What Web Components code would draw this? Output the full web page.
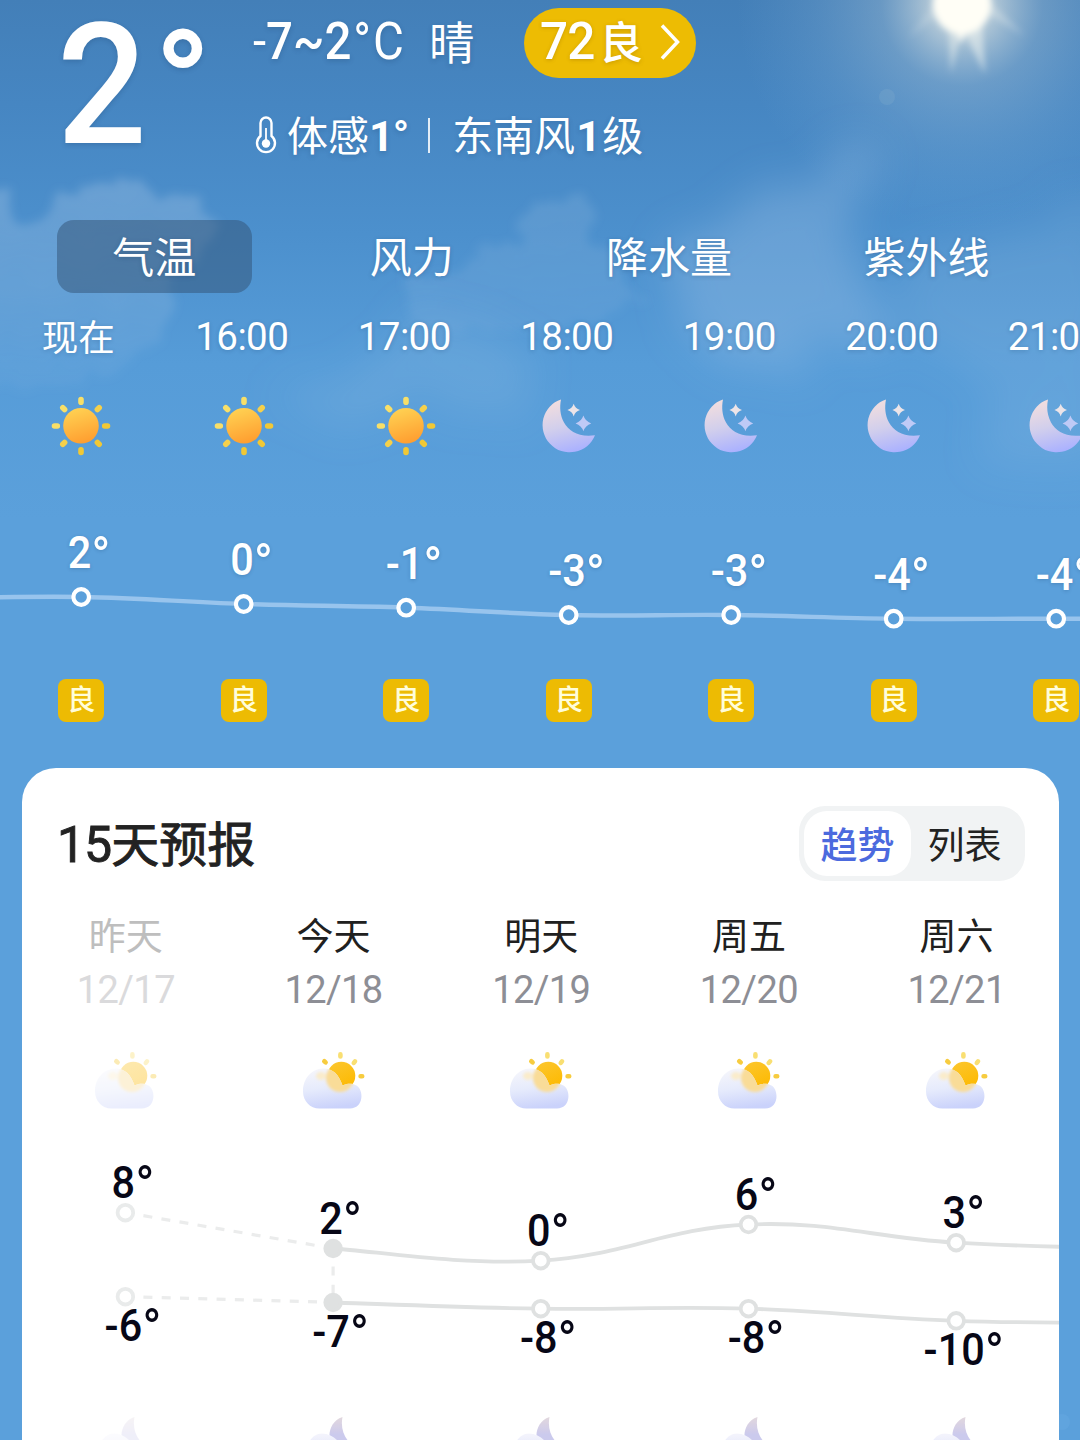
<!DOCTYPE html>
<html lang="zh-CN">
<head>
<meta charset="UTF-8">
<title>天气</title>
<style>
    body {
        margin: 0;
        width: 1080px;
        height: 1440px;
        overflow: hidden;
        background: #5aa0db;
        font-family: Roboto, "Noto Sans CJK SC", sans-serif;
    }
</style>
</head>
<body>
<weather-app></weather-app>

<script>
// Smooth curve through the points
function curve(pts) {
    const k = 0.2;
    let d = `M${pts[0][0]} ${pts[0][1]}`;
    for (let i = 0; i < pts.length - 1; i++) {
        const p0 = pts[i - 1] || pts[i];
        const p1 = pts[i];
        const p2 = pts[i + 1];
        const p3 = pts[i + 2] || p2;
        d += `C${p1[0] + (p2[0] - p0[0]) * k} ${p1[1] + (p2[1] - p0[1]) * k} ${p2[0] - (p3[0] - p1[0]) * k} ${p2[1] - (p3[1] - p1[1]) * k} ${p2[0]} ${p2[1]}`;
    }
    return d;
}

// Temperature label, slightly condensed, centered on x
function label(x, y, value, color) {
    return `<text transform="translate(${x} ${y}) scale(0.92 1)" text-anchor="middle" fill="${color}" font-size="45" font-weight="500">${value}<tspan font-size="56" font-weight="400" dy="7.500">°</tspan></text>`;
}

const ICONS = {
    sun: `
        <defs>
            <linearGradient id="g" x1="0.3" y1="0" x2="0.6" y2="1">
                <stop offset="0" stop-color="#ffd253"/><stop offset="1" stop-color="#ff9d2f"/>
            </linearGradient>
        </defs>
        <g stroke-width="5.600" stroke-linecap="round">
            <path stroke="#f8df68" d="M32 5.500v2.800M13.800 13.800l1.800 1.800M5.500 32h2.800"/>
            <path stroke="#f5d04b" d="M50.200 13.800l-1.800 1.800M13.800 50.200l1.800-1.800"/>
            <path stroke="#f1c835" d="M55.700 32h2.800M50.200 50.200l-1.800-1.800M32 55.700v2.800"/>
        </g>
        <circle cx="32" cy="31.800" r="17.800" fill="url(#g)"/>`,
    moon: `
        <defs>
            <linearGradient id="g" x1="0.3" y1="0" x2="0.55" y2="1">
                <stop offset="0" stop-color="#f3dede"/><stop offset="0.5" stop-color="#d2cfec"/><stop offset="1" stop-color="#aab1ff"/>
            </linearGradient>
        </defs>
        <path fill="url(#g)" d="M24 5.400A27.200 27.200 0 1 0 58 41.300C42 43.500 32 37.500 27 28.500C23 21 22.500 13 24 5.400Z"/>
        <path fill="#ece4e8" d="M36.700 9.800q1.500 4.800 6.300 6.300q-4.800 1.500-6.300 6.300q-1.500-4.800-6.300-6.300q4.800-1.500 6.300-6.300z"/>
        <path fill="#bfcaf6" d="M46.400 21.600q1.900 5.900 7.800 7.800q-5.900 1.900-7.800 7.800q-1.900-5.900-7.800-7.800q5.900-1.900 7.800-7.800z"/>`,
    partly: `
        <defs>
            <linearGradient id="g" x1="0.2" y1="0" x2="0.4" y2="1">
                <stop offset="0" stop-color="#f6f6fb"/><stop offset="0.5" stop-color="#e6ebfc"/><stop offset="1" stop-color="#cad2fb"/>
            </linearGradient>
            <linearGradient id="s" x1="0.2" y1="0" x2="0.7" y2="1">
                <stop offset="0" stop-color="#fcc62d"/><stop offset="1" stop-color="#fdb900"/>
            </linearGradient>
            <clipPath id="c"><path d="M18.500 60.500C9 60.500 2 53 2 43.500C2 31 10 21 22 20.600C32 20.300 38 27 41.500 37.500C46 35.500 51 35 55.500 37.600C63 42 63 60.500 49 60.500Z"/></clipPath>
            <filter id="b" x="-40%" y="-40%" width="180%" height="180%"><feGaussianBlur stdDeviation="1.600"/></filter>
        </defs>
        <circle cx="40.300" cy="27.800" r="14" fill="url(#s)"/>
        <g stroke-width="4.600" stroke-linecap="round">
            <path stroke="#f7cc3f" d="M23.300 13.200l1.300 1.200M59.600 28.300h1.600"/>
            <path stroke="#f9df72" d="M39.400 6.400v2M54 13.400l-1.200 1.500"/>
        </g>
        <path fill="url(#g)" d="M18.500 60.500C9 60.500 2 53 2 43.500C2 31 10 21 22 20.600C32 20.300 38 27 41.500 37.500C46 35.500 51 35 55.500 37.600C63 42 63 60.500 49 60.500Z"/>
        <g clip-path="url(#c)">
            <g filter="url(#b)">
                <circle cx="39" cy="30" r="14" fill="#f9dc98"/>
                <ellipse cx="20" cy="28" rx="5" ry="4" fill="#faeccb"/>
            </g>
        </g>`,
    cloudyNight: `
        <defs>
            <linearGradient id="g" x1="0" y1="0" x2="0" y2="1">
                <stop offset="0" stop-color="#ddd1d8"/><stop offset="0.5" stop-color="#c3c1ea"/>
            </linearGradient>
            <linearGradient id="w" x1="0" y1="0" x2="0" y2="1">
                <stop offset="0" stop-color="#f3f3fc"/><stop offset="1" stop-color="#cad2fb"/>
            </linearGradient>
        </defs>
        <path fill="url(#g)" d="M40.500 7C31 10 27 19 27.500 27C31 40 44 46 59 39C49 37 37 25 40.500 7Z"/>
        <path fill="url(#w)" d="M17 60C-3 60 1 24 20 23.500C30 24 37 30 40 38C57 32 63 60 48 60Z"/>`
};

class WeatherIcon extends HTMLElement {
    constructor() {
        super();
        this.attachShadow({ mode: 'open' });
    }

    connectedCallback() {
        this.shadowRoot.innerHTML = `
            <style>
                :host { display: block; width: 64px; height: 64px; }
                svg { display: block; width: 100%; height: 100%; overflow: visible; }
            </style>
            <svg viewBox="0 0 64 64" fill="none">${ICONS[this.getAttribute('name')]}</svg>
        `;
    }
}

class WeatherSky extends HTMLElement {
    constructor() {
        super();
        this.attachShadow({ mode: 'open' });
        this.shadowRoot.innerHTML = `
            <style>
                :host { display: block; position: absolute; inset: 0; z-index: -1; }
                svg { display: block; }
            </style>
            <svg width="1080" height="1440" viewBox="0 0 1080 1440">
                <defs>
                    <linearGradient id="sky" x1="0" y1="0" x2="0" y2="520" gradientUnits="userSpaceOnUse">
                        <stop offset="0" stop-color="#437fb8"/>
                        <stop offset="0.2" stop-color="#4686c2"/>
                        <stop offset="0.45" stop-color="#4c90cd"/>
                        <stop offset="0.7" stop-color="#569cd8"/>
                        <stop offset="1" stop-color="#5ba0db"/>
                    </linearGradient>
                    <radialGradient id="halo">
                        <stop offset="0" stop-color="#fffdf2" stop-opacity="0.95"/>
                        <stop offset="0.16" stop-color="#e6e9e4" stop-opacity="0.62"/>
                        <stop offset="0.36" stop-color="#b4cad9" stop-opacity="0.34"/>
                        <stop offset="0.65" stop-color="#94b9d8" stop-opacity="0.18"/>
                        <stop offset="1" stop-color="#7cacd8" stop-opacity="0"/>
                    </radialGradient>
                    <filter id="soft" x="-30%" y="-30%" width="160%" height="160%"><feGaussianBlur stdDeviation="3"/></filter>
                    <filter id="puff" x="-20%" y="-20%" width="140%" height="140%">
                        <feTurbulence type="fractalNoise" baseFrequency="0.03" numOctaves="5" seed="8" result="n"/>
                        <feDisplacementMap in="SourceGraphic" in2="n" scale="40" xChannelSelector="R" yChannelSelector="G"/>
                        <feGaussianBlur stdDeviation="5"/>
                    </filter>
                    <filter id="haze" x="-40%" y="-40%" width="180%" height="180%">
                        <feTurbulence type="fractalNoise" baseFrequency="0.02" numOctaves="4" seed="3" result="n"/>
                        <feDisplacementMap in="SourceGraphic" in2="n" scale="60" xChannelSelector="R" yChannelSelector="G"/>
                        <feGaussianBlur stdDeviation="20"/>
                    </filter>
                    <linearGradient id="fade" x1="0" y1="180" x2="0" y2="390" gradientUnits="userSpaceOnUse">
                        <stop offset="0" stop-color="#a5c4e4" stop-opacity="0.36"/>
                        <stop offset="0.5" stop-color="#a5c4e4" stop-opacity="0.24"/>
                        <stop offset="1" stop-color="#a5c4e4" stop-opacity="0.06"/>
                    </linearGradient>
                </defs>
                <rect width="1080" height="1440" fill="url(#sky)"/>

                <g filter="url(#puff)" fill="url(#fade)">
                    <path d="M-20 190L8 190L18 214L52 220L62 190L100 182L135 186L150 196L185 192L203 200L212 230L190 270L160 330L120 370L60 385L-20 390Z"/>
                    <path d="M405 280L470 265L515 240L540 200L580 200L598 245L640 300L560 330L470 330L420 320Z" fill-opacity="0.6"/>
                </g>
                <g filter="url(#haze)" fill="#a2c4e6">
                    <path d="M670 250L740 200L800 190L845 145L870 160L850 240L890 330L780 370L690 340Z" fill-opacity="0.32"/>
                    <path d="M900 260L1000 230L1110 195L1110 340L980 380L900 330Z" fill-opacity="0.18"/>
                    <path d="M270 395L340 380L430 320L540 340L520 420L420 400L330 425Z" fill-opacity="0.19"/>
                    <path d="M980 390L1110 340L1110 450L990 460Z" fill-opacity="0.17"/>
                </g>

                <circle cx="962" cy="5" r="225" fill="url(#halo)"/>
                <g filter="url(#soft)" fill="#fffef6">
                    <ellipse cx="962" cy="4" rx="29" ry="30"/>
                    <path d="M948 20L951 74L962 28Z" fill-opacity="0.4"/>
                    <path d="M962 28L985 74L982 18Z" fill-opacity="0.45"/>
                    <path d="M956 26L961 44L968 26Z"/>
                    <path d="M984 12L1025 36L990 2Z" fill-opacity="0.25"/>
                    <path d="M940 14L908 38L934 4Z" fill-opacity="0.15"/>
                </g>
                <circle cx="887" cy="97" r="8" fill="#b9cfd8" fill-opacity="0.12"/>
                <circle cx="1062" cy="1422" r="8" fill="#6bade4" fill-opacity="0.35"/>
            </svg>
        `;
    }
}

class CurrentWeather extends HTMLElement {
    constructor() {
        super();
        this.attachShadow({ mode: 'open' });
        this.shadowRoot.innerHTML = `
            <style>
                :host {
                    display: flex;
                    height: 220px;
                    color: #fff;
                    text-shadow: 0 2px 5px rgba(20, 50, 90, 0.22);
                    white-space: nowrap;
                }
                .temp { display: flex; width: 253px; }
                .temp b {
                    font-weight: 500;
                    font-size: 168px;
                    line-height: 172px;
                    margin: 0 0 0 57px;
                    width: 97px;
                    transform: scaleX(0.94);
                    transform-origin: left;
                }
                .temp i { font-style: normal; font-weight: 700; font-size: 148px; line-height: 172px; }
                .info { display: flex; flex-direction: column; }
                .row { display: flex; align-items: center; }
                .row.top { height: 86px; font-size: 51px; }
                .range { width: 178px; margin-top: -3px; }
                .range span { display: block; transform: scaleX(0.93); transform-origin: left; font-weight: 500; }
                .range em { font-style: normal; font-weight: 400; }
                .range em + em { margin-left: 2px; }
                .sky { font-size: 45.500px; width: 93px; margin: -7px 2px 0 -2px; }
                .aqi {
                    display: flex;
                    align-items: center;
                    box-sizing: border-box;
                    width: 172px;
                    height: 70px;
                    padding-left: 16px;
                    border-radius: 35px;
                    background: #edbc03;
                    font-weight: 500;
                    text-shadow: 0 1px 4px rgba(120, 80, 0, 0.3);
                }
                .aqi .num { width: 61px; letter-spacing: -1px; margin-top: -4px; transform: scaleX(0.97); transform-origin: left; }
                .aqi .lvl { font-size: 44px; width: 59px; margin: -6px 2px 0 -2px; }
                .aqi svg { margin-top: -2px; }
                .row.feel { height: 97px; font-size: 41px; }
                .feel span { margin-top: -4px; }
                .feel svg { width: 22px; height: 38px; margin-right: 10px; margin-left: 2px; }
                .feel b { font-weight: 700; font-size: 43px; letter-spacing: -1px; }
                .feel .wind b { letter-spacing: 1.500px; margin-left: 1px; }
                .feel b i { font-style: normal; font-weight: 500; }
                .bar { width: 2px; height: 35px; background: rgba(255, 255, 255, 0.85); margin: 2px 22px 0 20px; }
            </style>
            <div class="temp"><b>2</b><i>°</i></div>
            <div class="info">
                <div class="row top">
                    <div class="range"><span><em>-</em>7~2<em>°</em><em>C</em></span></div>
                    <div class="sky">晴</div>
                    <div class="aqi">
                        <span class="num">72</span><span class="lvl">良</span>
                        <svg width="20" height="36" viewBox="0 0 20 36" fill="none" stroke="#fff" stroke-width="3.500"><path d="M2 1.500L17.500 18L2 34.500"/></svg>
                    </div>
                </div>
                <div class="row feel">
                    <svg viewBox="0 0 22 38" fill="none" stroke="#fff" stroke-width="2.400">
                        <path d="M5.500 20V7a5.500 5.500 0 0 1 11 0V20a9 9 0 1 1-11 0Z"/>
                        <path d="M11 12V26" stroke-width="1.800"/>
                        <circle cx="11" cy="27.500" r="4.200" fill="#fff" stroke="none"/>
                    </svg>
                    <span>体感<b>1<i>°</i></b></span>
                    <div class="bar"></div>
                    <span class="wind">东南风<b>1</b>级</span>
                </div>
            </div>
        `;
    }
}

class TabBar extends HTMLElement {
    constructor() {
        super();
        this.attachShadow({ mode: 'open' });
        this.shadowRoot.innerHTML = `
            <style>
                :host { display: grid; grid-template-columns: repeat(4, 257.400px); margin-left: 25.600px; height: 73px; }
                ::slotted(span) {
                    display: flex;
                    align-items: center;
                    justify-content: center;
                    width: 195px;
                    height: 69px;
                    padding-bottom: 4px;
                    margin: 0 auto;
                    border-radius: 17px;
                    color: #fff;
                    font-size: 42px;
                    text-shadow: 0 1px 4px rgba(20, 50, 90, 0.25);
                }
                ::slotted(.on) { background: rgba(50, 82, 115, 0.5); }
            </style>
            <slot></slot>
        `;
    }
}

class HourStrip extends HTMLElement {
    constructor() {
        super();
        this.attachShadow({ mode: 'open' });
        this.hours = [
            ['现在', 'sun', 2, 597],
            ['16:00', 'sun', 0, 604],
            ['17:00', 'sun', -1, 607.7],
            ['18:00', 'moon', -3, 615],
            ['19:00', 'moon', -3, 615],
            ['20:00', 'moon', -4, 618.7],
            ['21:00', 'moon', -4, 618.7]
        ];
    }

    connectedCallback() {
        const top = 472;
        const pts = this.hours.map((h, i) => [81.2 + i * 162.5, h[3] - top]);
        const line = curve([[-81, 599 - top], ...pts, [1219, 619 - top]]);

        this.shadowRoot.innerHTML = `
            <style>
                :host { display: block; color: #fff; text-shadow: 0 1px 4px rgba(20, 50, 90, 0.22); }
                .row { display: grid; grid-template-columns: repeat(7, 162.500px); justify-items: center; align-items: center; }
                .times { height: 86px; font-size: 38.500px; letter-spacing: -0.600px; margin-left: -2px; }
                .times span:first-child { font-size: 36.500px; margin: -2px 2px 0 0; letter-spacing: 0; }
                .icons { height: 93px; }
                svg.chart { display: block; overflow: visible; }
                .badges span {
                    display: flex;
                    justify-content: center;
                    width: 46px;
                    height: 43px;
                    border-radius: 8px;
                    background: #edbb03;
                    color: #fffdda;
                    font-size: 28.500px;
                    line-height: 44px;
                    font-weight: 500;
                    text-shadow: none;
                }
            </style>
            <div class="row times">${this.hours.map(h => `<span>${h[0]}</span>`).join('')}</div>
            <div class="row icons">${this.hours.map(h => `<weather-icon name="${h[1]}"></weather-icon>`).join('')}</div>
            <svg class="chart" width="1080" height="206.500" viewBox="0 0 1080 206.500">
                <path d="${line}" fill="none" stroke="#98c4ed" stroke-width="4.400"/>
                ${pts.map((p, i) => `
                    <circle cx="${p[0]}" cy="${p[1]}" r="7.800" fill="#5ba0db" stroke="#fff" stroke-width="4.200"/>
                    ${label(p[0] + 7.9, p[1] - 29, this.hours[i][2], '#fff')}
                `).join('')}
            </svg>
            <div class="row badges">${this.hours.map(() => '<span>良</span>').join('')}</div>
        `;
    }
}

class SegmentToggle extends HTMLElement {
    constructor() {
        super();
        this.attachShadow({ mode: 'open' });
        this.shadowRoot.innerHTML = `
            <style>
                :host {
                    display: flex;
                    box-sizing: border-box;
                    width: 226px;
                    height: 75px;
                    padding: 5px;
                    border-radius: 26px;
                    background: #f1f3f4;
                }
                ::slotted(span) {
                    display: flex;
                    align-items: center;
                    justify-content: center;
                    width: 107px;
                    height: 58px;
                    padding-top: 7px;
                    border-radius: 23px;
                    font-size: 37px;
                    line-height: 54px;
                    color: #222;
                }
                ::slotted(.on) { background: #fff; color: #4c6ade; font-weight: 500; }
            </style>
            <slot></slot>
        `;
    }
}

class ForecastCard extends HTMLElement {
    constructor() {
        super();
        this.attachShadow({ mode: 'open' });
        this.days = [
            ['昨天', '12/17', 8, -6, 1212.7, 1296.7],
            ['今天', '12/18', 2, -7, 1248.5, 1302.5],
            ['明天', '12/19', 0, -8, 1260.7, 1308.7],
            ['周五', '12/20', 6, -8, 1224.5, 1308.7],
            ['周六', '12/21', 3, -10, 1242.7, 1320.8]
        ];
    }

    // One row of markers with their labels
    markers(pts, key, dy) {
        return pts.map((p, i) => {
            const color = i === 0 ? '#e9ebeb' : '#dfe1e1';
            const fill = i === 1 ? color : '#fff';
            return `
                <circle cx="${p[0]}" cy="${p[1]}" r="7.800" fill="${fill}" stroke="${color}" stroke-width="3.800"/>
                ${label(p[0] + 7.6, p[1] + dy, this.days[i][key], '#070716')}`;
        }).join('');
    }

    connectedCallback() {
        const top = 1130;
        const x = i => 103.4 + i * 207.7;
        const high = this.days.map((d, i) => [x(i), d[4] - top]);
        const low = this.days.map((d, i) => [x(i), d[5] - top]);
        const next = x(5);

        this.shadowRoot.innerHTML = `
            <style>
                :host {
                    display: block;
                    width: 1037px;
                    height: 672px;
                    margin: 46.500px 0 0 22px;
                    border-radius: 34px 34px 0 0;
                    background: #fff;
                    overflow: hidden;
                }
                header { display: flex; justify-content: space-between; align-items: center; height: 75px; padding: 38px 34px 0 35px; }
                h2 { margin: 4px 0 0; font-size: 48px; font-weight: 400; -webkit-text-stroke: 0.9px #222; color: #222; line-height: 70px; }
                h2 span { font-size: 50px; letter-spacing: -1px; }
                .row { display: grid; grid-template-columns: repeat(5, 207.700px); justify-items: center; }
                .day { display: flex; flex-direction: column; align-items: center; }
                .day b { font-size: 37px; line-height: 54px; font-weight: 400; color: #202020; }
                .day span { font-size: 38px; line-height: 50px; color: #8d8e95; letter-spacing: -0.600px; }
                .names { margin-top: 29.500px; height: 137px; }
                .past b { color: #bebebe; }
                .past span { color: #dadadc; }
                weather-icon.past { opacity: 0.38; }
                .icons { height: 82.500px; margin-left: -1px; }
                svg { display: block; overflow: visible; }
                .night { margin-top: 280px; }
                .night weather-icon { opacity: 0.85; }
                .night .past { opacity: 0.25; }
                .chart { height: 0; }
            </style>
            <header>
                <h2><span>15</span>天预报</h2>
                <slot></slot>
            </header>
            <div class="row names">
                ${this.days.map((d, i) => `<div class="day${i ? '' : ' past'}"><b>${d[0]}</b><span>${d[1]}</span></div>`).join('')}
            </div>
            <div class="row icons">
                ${this.days.map((d, i) => `<weather-icon name="partly" class="${i ? '' : 'past'}"></weather-icon>`).join('')}
            </div>
            <div class="chart">
                <svg width="1037" height="280" viewBox="0 0 1037 280">
                    <g fill="none" stroke="#dfe1e1" stroke-width="3.800">
                        <path d="${curve([...high.slice(1), [next, 1249 - top]])}"/>
                        <path d="${curve([...low.slice(1), [next, 1323 - top]])}"/>
                    </g>
                    <g fill="none" stroke="#ebecec" stroke-width="3.200" stroke-dasharray="9 9.300">
                        <path d="M${x(0) + 18} ${high[0][1] + 3}L${x(1) - 14} ${high[1][1] - 2.5}"/>
                        <path d="M${x(0) + 18} ${low[0][1] + 0.5}L${x(1) - 14} ${low[1][1] - 0.5}"/>
                        <path d="M${x(1)} ${high[1][1] + 18}V${low[1][1]}"/>
                    </g>
                    ${this.markers(high, 2, -14.8)}
                    ${this.markers(low, 3, 44)}
                </svg>
            </div>
            <div class="row night">
                ${this.days.map((d, i) => `<weather-icon name="cloudyNight" class="${i ? '' : 'past'}"></weather-icon>`).join('')}
            </div>
        `;
    }
}

class WeatherApp extends HTMLElement {
    constructor() {
        super();
        this.attachShadow({ mode: 'open' });
        this.shadowRoot.innerHTML = `
            <style>
                :host {
                    display: flex;
                    flex-direction: column;
                    position: relative;
                    z-index: 0;
                    width: 1080px;
                    height: 1440px;
                    overflow: hidden;
                }
            </style>
            <weather-sky></weather-sky>
            <current-weather></current-weather>
            <tab-bar>
                <span class="on">气温</span>
                <span>风力</span>
                <span>降水量</span>
                <span>紫外线</span>
            </tab-bar>
            <hour-strip></hour-strip>
            <forecast-card>
                <segment-toggle>
                    <span class="on">趋势</span>
                    <span>列表</span>
                </segment-toggle>
            </forecast-card>
        `;
    }
}

customElements.define('weather-icon', WeatherIcon);
customElements.define('weather-sky', WeatherSky);
customElements.define('current-weather', CurrentWeather);
customElements.define('tab-bar', TabBar);
customElements.define('hour-strip', HourStrip);
customElements.define('segment-toggle', SegmentToggle);
customElements.define('forecast-card', ForecastCard);
customElements.define('weather-app', WeatherApp);
</script>
</body>
</html>
